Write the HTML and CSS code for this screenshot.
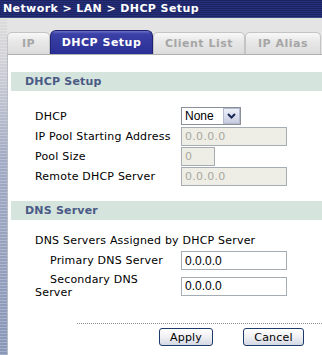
FILE: index.html
```html
<!DOCTYPE html>
<html lang="en">
<head>
    <meta charset="UTF-8">
    <title>DHCP Setup</title>
    <link rel="stylesheet" href="styles.css">
</head>
<body>
    <!-- Barra de titulo -->
    <div class="title-bar">Network &gt; LAN &gt; DHCP Setup</div>

    <div class="main">
        <div class="side-strip"></div>

        <div class="page">
            <!-- Abas -->
            <div class="tabs">
                <div class="tab tab-ip">IP</div>
                <div class="tab tab-active">DHCP Setup</div>
                <div class="tab tab-client">Client List</div>
                <div class="tab tab-alias">IP Alias</div>
            </div>

            <div class="panel">
                <div class="section-title">DHCP Setup</div>
                <table class="form">
                    <tr>
                        <td class="label">DHCP</td>
                        <td>
                            <div class="select">
                                <span class="select-value">None</span>
                                <span class="select-arrow">
                                    <svg width="9" height="6" viewBox="0 0 9 6"><path d="M1 1 L4.5 4.5 L8 1" fill="none" stroke="#1c2a5a" stroke-width="2"/></svg>
                                </span>
                            </div>
                        </td>
                    </tr>
                    <tr>
                        <td class="label">IP Pool Starting Address</td>
                        <td><input class="field disabled" type="text" value="0.0.0.0" disabled></td>
                    </tr>
                    <tr>
                        <td class="label">Pool Size</td>
                        <td><input class="field disabled short" type="text" value="0" disabled></td>
                    </tr>
                    <tr>
                        <td class="label">Remote DHCP Server</td>
                        <td><input class="field disabled" type="text" value="0.0.0.0" disabled></td>
                    </tr>
                </table>

                <div class="section-title dns-title">DNS Server</div>
                <div class="dns-note">DNS Servers Assigned by DHCP Server</div>
                <table class="form dns-form">
                    <tr>
                        <td class="label indent">Primary DNS Server</td>
                        <td><input class="field" type="text" value="0.0.0.0"></td>
                    </tr>
                    <tr>
                        <td class="label indent">Secondary DNS Server</td>
                        <td><input class="field" type="text" value="0.0.0.0"></td>
                    </tr>
                </table>

                <div class="divider"></div>
                <div class="buttons">
                    <button class="btn btn-apply">Apply</button>
                    <button class="btn btn-cancel">Cancel</button>
                </div>
            </div>
        </div>
    </div>
</body>
</html>
```

FILE: styles.css
```css
* {
    margin: 0;
    padding: 0;
    box-sizing: border-box;
}

body {
    width: 322px;
    height: 355px;
    overflow: hidden;
    background: #fff;
    font-family: "DejaVu Sans", Verdana, sans-serif;
    font-size: 11px;
    letter-spacing: 0.2px;
    color: #000;
}

/* Barra de titulo */
.title-bar {
    height: 18px;
    padding-left: 3px;
    line-height: 17px;
    color: #fff;
    font-weight: bold;
    font-size: 11px;
    letter-spacing: 0.4px;
    background: repeating-linear-gradient(to bottom, #1b2363 0, #1b2363 1px, #26307a 1px, #26307a 2px);
    border-bottom: 1px solid #3a4a8a;
}

.main {
    display: flex;
    height: 337px;
}

.side-strip {
    width: 8px;
    flex-shrink: 0;
    border-right: 1px solid #b8bcc4;
    background:
        repeating-linear-gradient(to bottom, rgba(255,255,255,0.25) 0, rgba(255,255,255,0.25) 1px, transparent 1px, transparent 3px),
        linear-gradient(to bottom, #dcdcdc 0, #d2d2d8 40px, #a2abc4 140px, #8896b8 337px);
}

.page {
    flex: 1;
    display: flex;
    flex-direction: column;
    background: #fff;
}

/* Abas */
.tabs {
    height: 37px;
    display: flex;
    align-items: flex-end;
    background: #e4e4e4;
    border-bottom: 1px solid #b0b0b0;
    margin-left: -1px;
}

.tab {
    height: 22px;
    line-height: 22px;
    text-align: center;
    font-weight: bold;
    font-size: 11px;
    letter-spacing: 0.5px;
    color: #a6a6a6;
    background: linear-gradient(to bottom, #f8f8f8 0, #e8e8e8 40%, #dcdcdc 100%);
    border: 1px solid #c4c4c4;
    border-bottom: none;
    border-radius: 5px 5px 0 0;
}

.tab-ip {
    width: 43px;
}

.tab-active {
    width: 103px;
    height: 24px;
    line-height: 24px;
    color: #fff;
    background: linear-gradient(to bottom, #6a70c8 0, #3a40a6 3px, #2a2f96 100%);
    border-color: #1e2270;
    border-radius: 6px 6px 0 0;
}

.tab-client {
    width: 92px;
}

.tab-alias {
    width: 76px;
}

.panel {
    flex: 1;
    padding-top: 17px;
    padding-left: 3px;
}

.section-title {
    height: 19px;
    line-height: 19px;
    padding-left: 14px;
    background: #d5e4dc;
    color: #4a5a86;
    font-weight: bold;
}

.form {
    border-collapse: collapse;
    margin-left: 24px;
    margin-top: 15px;
}

.form td {
    height: 20px;
    padding: 0;
    vertical-align: middle;
}

.form .label {
    width: 146px;
    padding-right: 6px;
}

.select {
    width: 60px;
    height: 18px;
    display: flex;
    border: 1px solid #8a9098;
    background: #fff;
}

.select-value {
    flex: 1;
    padding-left: 3px;
    line-height: 16px;
    font-family: "Liberation Sans", Arial, sans-serif;
    font-size: 12px;
    letter-spacing: 0;
}

.select-arrow {
    width: 17px;
    display: flex;
    align-items: center;
    justify-content: center;
    background: linear-gradient(to bottom, #eef0f8, #c8cce0);
    border: 1px solid #b4bad0;
}

.field {
    display: block;
    width: 106px;
    height: 19px;
    padding-left: 3px;
    border: 1px solid #a6acb4;
    background: #fff;
    font-family: "Liberation Sans", Arial, sans-serif;
    font-size: 12px;
    color: #000;
}

.field.disabled {
    background: #efeee6;
    color: #a8a8a0;
    font-family: "DejaVu Sans", Verdana, sans-serif;
    font-size: 11px;
    letter-spacing: 0.3px;
}

.field.short {
    width: 34px;
}

.dns-title {
    margin-top: 15px;
}

.dns-note {
    margin: 14px 0 0 24px;
    height: 14px;
    line-height: 14px;
}

.dns-form {
    margin-top: 0;
}

.dns-form td {
    height: 25px;
}

.dns-form .label {
    width: 146px;
    line-height: 13px;
}

.indent {
    text-indent: 15px;
}

/* Botoes */
.divider {
    margin: 24px 0 0 66px;
    height: 1px;
    background: repeating-linear-gradient(to right, #8c8c8c 0, #8c8c8c 1px, transparent 1px, transparent 2px);
}

.buttons {
    padding: 4px 0 0 148px;
    display: flex;
    gap: 30px;
}

.btn {
    height: 18px;
    font-family: "DejaVu Sans", Verdana, sans-serif;
    font-size: 11px;
    letter-spacing: 0.2px;
    color: #000;
    border: 1px solid #1c3a6a;
    border-radius: 3px;
    background: linear-gradient(to bottom, #ffffff 0, #f0f0f4 50%, #d4d8e4 100%);
}

.btn-apply {
    width: 54px;
}

.btn-cancel {
    width: 61px;
}
```
